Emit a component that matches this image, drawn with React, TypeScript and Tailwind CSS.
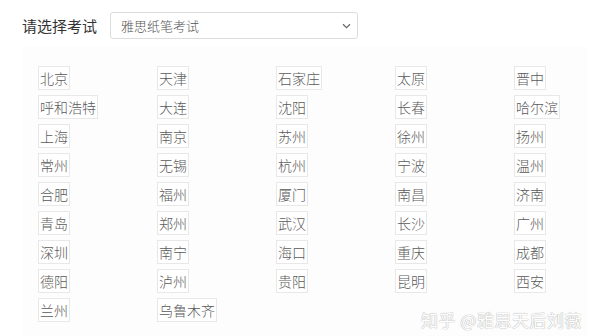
import React from 'react';

const cities = [
  '北京', '天津', '石家庄', '太原', '晋中',
  '呼和浩特', '大连', '沈阳', '长春', '哈尔滨',
  '上海', '南京', '苏州', '徐州', '扬州',
  '常州', '无锡', '杭州', '宁波', '温州',
  '合肥', '福州', '厦门', '南昌', '济南',
  '青岛', '郑州', '武汉', '长沙', '广州',
  '深圳', '南宁', '海口', '重庆', '成都',
  '德阳', '泸州', '贵阳', '昆明', '西安',
  '兰州', '乌鲁木齐',
];

export default function App() {
  return (
    <div
      className="relative w-[600px] h-[336px] overflow-hidden bg-white font-light"
      style={{ fontFamily: '"Noto Sans CJK SC", "Noto Sans", sans-serif' }}
    >
      {/* Exam select */}
      <div className="flex items-center pl-[22px] pt-[12px]">
        <span className="text-[15px] text-[#333] w-[88px] leading-[27px] font-normal">请选择考试</span>
        <div className="flex items-center justify-between w-[248px] h-[27px] border border-[#dcdcdc] rounded-[3px] pl-[10px] pr-[6px]">
          <span className="text-[13px] text-[#555] leading-none">雅思纸笔考试</span>
          <svg width="9" height="6" viewBox="0 0 9 6" fill="none">
            <path d="M1 1.2 L4.5 4.6 L8 1.2" stroke="#666" strokeWidth="1.2" />
          </svg>
        </div>
      </div>

      {/* City list */}
      <div className="mt-[8px] ml-[22px] w-[565px] h-[300px] bg-[#fdfdfd] pt-[19px] pl-[16px]">
        <div className="grid grid-cols-[repeat(5,119px)] gap-y-[5px]">
          {cities.map((c) => (
            <div key={c} className="flex">
              <span className="h-[24px] px-[1px] border border-[#e8e8e8] bg-white text-[14px] leading-[22px] text-[#5a5a5a]">
                {c}
              </span>
            </div>
          ))}
        </div>
      </div>

      {/* Watermark */}
      <div
        className="absolute left-[421px] top-[309px] text-[17px] leading-[22px] text-white tracking-[0.5px] font-normal"
        style={{ textShadow: '0 0 1px #b0b0b0, 0 0 1px #b0b0b0' }}
      >
        知乎 @雅思天后刘薇
      </div>
    </div>
  );
}
